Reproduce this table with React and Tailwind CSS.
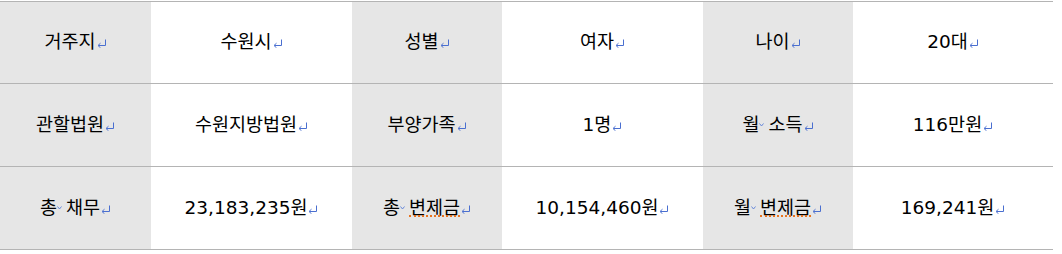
import React from "react";

const Ret = () => (
  <svg width="10" height="9" viewBox="0 0 10 9" className="inline-block ml-[1px] mb-[-1px]" aria-hidden>
    <path d="M8.5 0.5 V6.5 H1.5" fill="none" stroke="#4a6fd0" strokeWidth="1" />
    <path d="M1 6.5 L3.5 4.2 M1 6.5 L3.5 8.8" fill="none" stroke="#4a6fd0" strokeWidth="1" />
  </svg>
);

const Sp = () => (
  <span className="inline-flex items-center w-[9px] justify-start align-middle">
    <svg width="5" height="4" viewBox="0 0 5 4" aria-hidden className="mt-[-2px]">
      <path d="M0.5 0.5 L2.5 3 L4.5 0.5" fill="none" stroke="#5a7fd8" strokeWidth="0.9" />
    </svg>
  </span>
);

const Sq = ({ children }) => (
  <span className="relative inline-block">
    {children}
    <span className="absolute left-0 right-0 bottom-[0px] h-0 border-b-2 border-dotted border-[#e8731f]" />
  </span>
);

const Cell = ({ gray, w, children }) => (
  <div
    className={`${w} flex items-center justify-center ${gray ? "bg-[#e6e6e6]" : "bg-white"}`}
  >
    <span className="whitespace-nowrap leading-none text-black">{children}</span>
  </div>
);

const Row = ({ h, cells }) => (
  <div className={`flex ${h} border-t border-[#b4b4b4]`}>
    {cells.map((c, i) => (
      <Cell
        key={i}
        gray={i % 2 === 0}
        w={["w-[151px]", "w-[201px]", "w-[150px]", "w-[201px]", "w-[150px]", "w-[200px]"][i]}
      >
        {c}
        <Ret />
      </Cell>
    ))}
  </div>
);

export default function App() {
  return (
    <div
      className="w-[1062px] h-[254px] bg-white pt-px"
      style={{ fontFamily: '"DejaVu Sans", "Noto Sans CJK KR", sans-serif' }}
    >
      <div className="w-[1053px] text-[18.5px] border-b border-[#b4b4b4]">
        <Row
          h="h-[82px]"
          cells={["거주지", "수원시", "성별", "여자", "나이", "20대"]}
        />
        <Row
          h="h-[83px]"
          cells={[
            "관할법원",
            "수원지방법원",
            "부양가족",
            "1명",
            <>월<Sp />소득</>,
            "116만원",
          ]}
        />
        <Row
          h="h-[83px]"
          cells={[
            <>총<Sp />채무</>,
            "23,183,235원",
            <>총<Sp /><Sq>변제금</Sq></>,
            "10,154,460원",
            <>월<Sp /><Sq>변제금</Sq></>,
            "169,241원",
          ]}
        />
      </div>
    </div>
  );
}
